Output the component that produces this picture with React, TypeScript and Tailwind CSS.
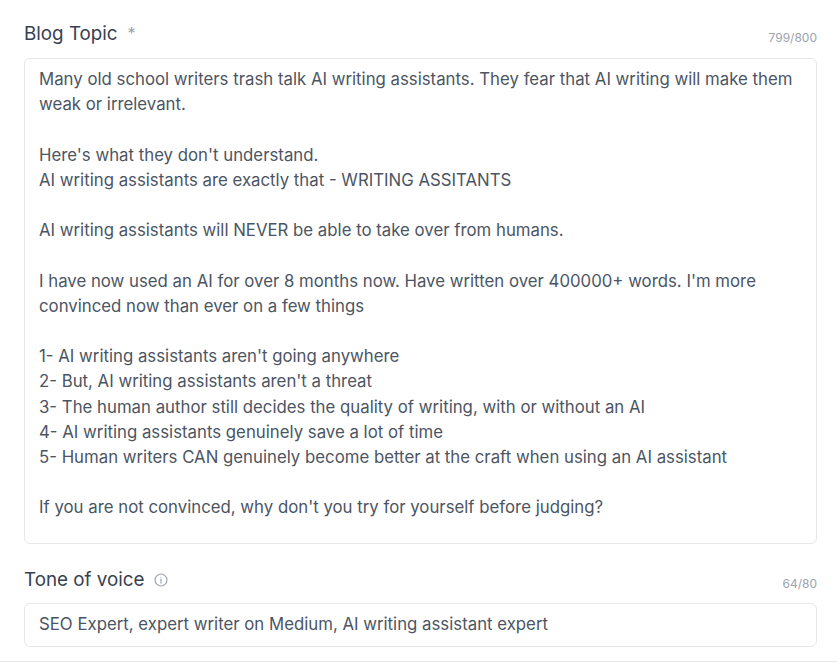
import React from "react";

const topic = `Many old school writers trash talk AI writing assistants. They fear that AI writing will make them weak or irrelevant.

Here's what they don't understand.
AI writing assistants are exactly that - WRITING ASSITANTS

AI writing assistants will NEVER be able to take over from humans.

I have now used an AI for over 8 months now. Have written over 400000+ words. I'm more convinced now than ever on a few things

1- AI writing assistants aren't going anywhere
2- But, AI writing assistants aren't a threat
3- The human author still decides the quality of writing, with or without an AI
4- AI writing assistants genuinely save a lot of time
5- Human writers CAN genuinely become better at the craft when using an AI assistant

If you are not convinced, why don't you try for yourself before judging?`;

export default function App() {
  return (
    <div className="w-[837px] h-[665px] bg-white overflow-hidden" style={{ fontFamily: "Inter, 'Noto Sans', sans-serif" }}>
      <div className="pl-[24px] pr-[20px] pt-[22px] pb-[14px] border-b border-[#e5e7eb]">
        <div className="flex items-end justify-between">
          <div className="flex items-center gap-[10px] text-[18.8px] leading-[24px] text-[#374151]">
            <span>Blog Topic</span>
            <span className="text-[#9ca3af] text-[16px] leading-[16px] -mt-[2px]">*</span>
          </div>
          <span className="text-[12px] leading-[16px] text-[#9ca3af] mb-[0px]">799/800</span>
        </div>
        <div className="mt-[12px] h-[486px] rounded-[6px] border border-[#e5e7eb] px-[14px] pt-[8px] text-[16.8px] leading-[25.2px] text-[#4b5563] whitespace-pre-wrap">
          {topic}
        </div>
        <div className="mt-[24px] flex items-end justify-between">
          <div className="flex items-center gap-[10px] text-[18.8px] leading-[24px] text-[#374151]">
            <span>Tone of voice</span>
            <svg width="14" height="14" viewBox="0 0 16 16" fill="none" stroke="#9ca3af" strokeWidth="1.3">
              <circle cx="8" cy="8" r="6.8" />
              <line x1="8" y1="7" x2="8" y2="11.5" strokeLinecap="round" />
              <circle cx="8" cy="4.8" r="0.6" fill="#9ca3af" stroke="none" />
            </svg>
          </div>
          <span className="text-[12px] leading-[16px] text-[#9ca3af]">64/80</span>
        </div>
        <div className="mt-[11px] h-[44px] rounded-[6px] border border-[#e5e7eb] px-[14px] flex items-center text-[16.8px] text-[#4b5563]">
          SEO Expert, expert writer on Medium, AI writing assistant expert
        </div>
      </div>
    </div>
  );
}
